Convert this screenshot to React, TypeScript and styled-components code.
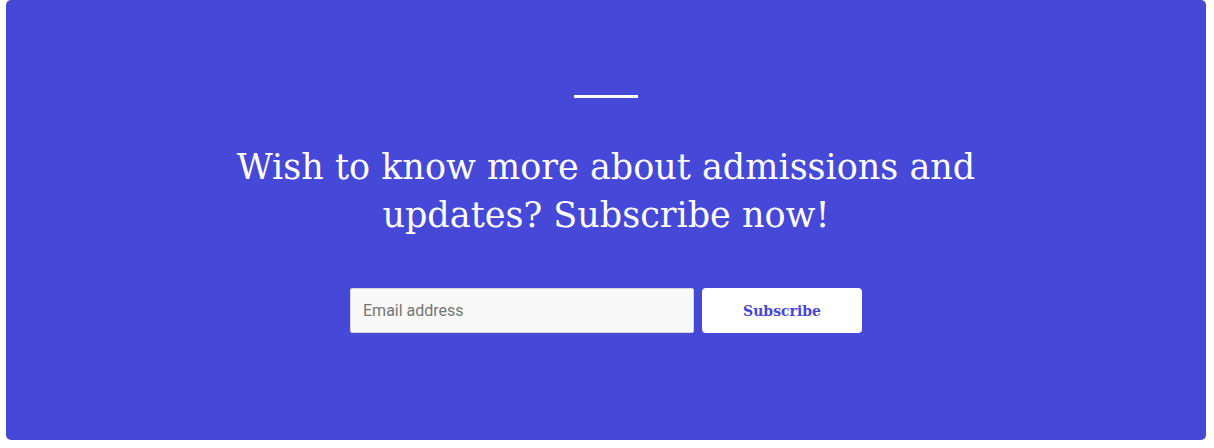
import React from "react";
import styled, { createGlobalStyle } from "styled-components";

const Global = createGlobalStyle`
  html, body { margin: 0; padding: 0; background: #ffffff; }
  * { box-sizing: border-box; }
`;

const Page = styled.div`
  padding: 0 0 0 6px;
`;

const Banner = styled.section`
  width: 1200px;
  height: 440px;
  background: #4648d7;
  border-radius: 5px;
  display: flex;
  flex-direction: column;
  align-items: center;
  padding-top: 95px;
`;

const Divider = styled.div`
  width: 64px;
  height: 3px;
  background: #ffffff;
`;

const Heading = styled.h2`
  margin: 45px 0 0;
  font-family: "DejaVu Serif", Georgia, serif;
  font-weight: 400;
  font-size: 35px;
  line-height: 48px;
  color: #ffffff;
  text-align: center;
  width: 760px;
`;

const Form = styled.form`
  display: flex;
  gap: 8px;
  margin-top: 49px;
`;

const EmailInput = styled.input`
  width: 344px;
  height: 45px;
  background: #f9f9f9;
  border: 1px solid #d6d6dc;
  border-radius: 2px;
  padding: 0 12px;
  font-family: Roboto, "Liberation Sans", sans-serif;
  font-size: 16px;
  color: #333;
  outline: none;
  &::placeholder { color: #757575; }
`;

const SubmitButton = styled.button`
  width: 160px;
  height: 45px;
  background: #ffffff;
  border: none;
  border-radius: 4px;
  font-family: "DejaVu Serif", Georgia, serif;
  font-weight: 700;
  font-size: 14px;
  color: #4648d7;
  cursor: pointer;
`;

export default function App() {
  return (
    <Page>
      <Global />
      <Banner>
        <Divider />
        <Heading>Wish to know more about admissions and updates? Subscribe now!</Heading>
        <Form onSubmit={(e) => e.preventDefault()}>
          <EmailInput type="email" placeholder="Email address" />
          <SubmitButton type="submit">Subscribe</SubmitButton>
        </Form>
      </Banner>
    </Page>
  );
}
